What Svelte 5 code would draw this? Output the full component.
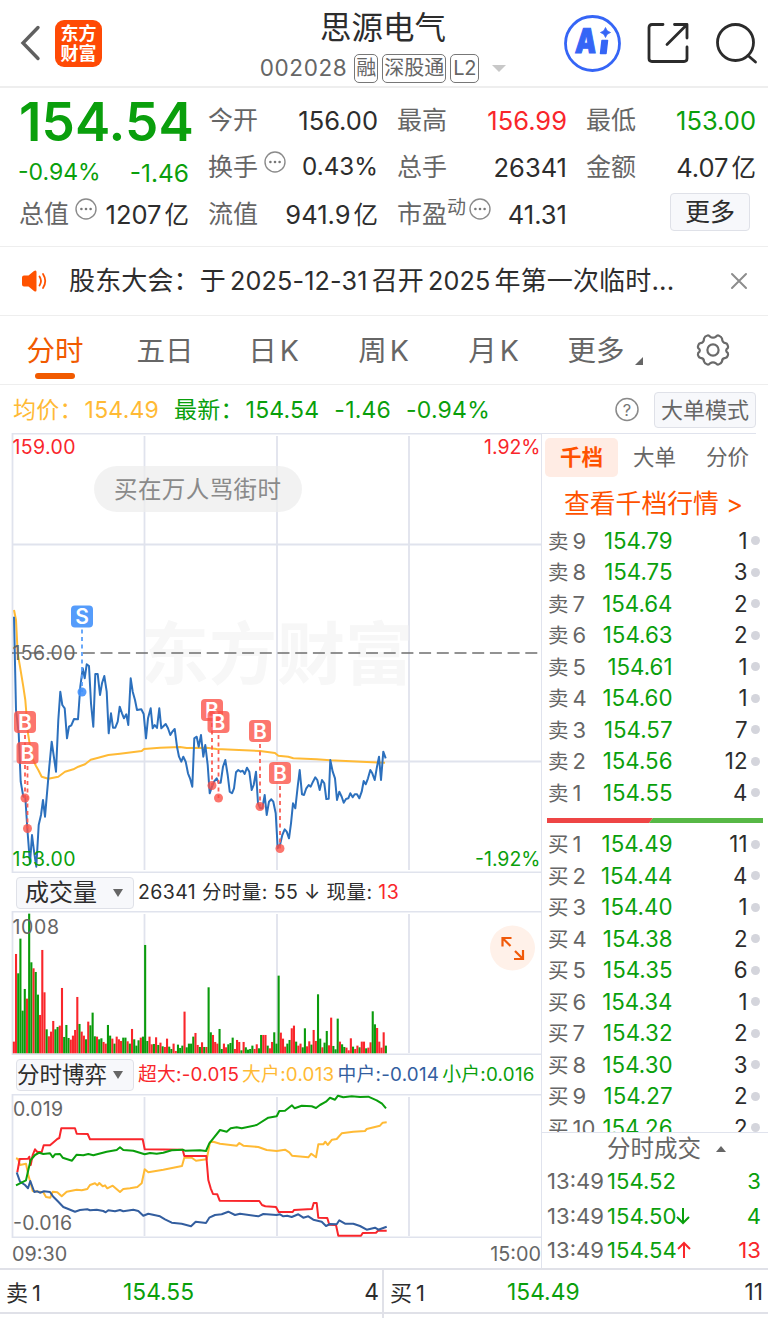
<script lang="ts">
  type Side = "卖" | "买";
  type Level = { side: Side; level: number; price: string; qty: number };

  const tabs = ["分时", "五日", "日K", "周K", "月K", "更多"];
  let activeTab = $state("分时");
  let noticeOpen = $state(true);

  const asks: Level[] = [
    ["154.79", 1], ["154.75", 3], ["154.64", 2], ["154.63", 2], ["154.61", 1],
    ["154.60", 1], ["154.57", 7], ["154.56", 12], ["154.55", 4],
  ].map(([price, qty], i) => ({ side: "卖", level: 9 - i, price, qty }) as Level);

  const bids: Level[] = [
    ["154.49", 11], ["154.44", 4], ["154.40", 1], ["154.38", 2], ["154.35", 6],
    ["154.34", 1], ["154.32", 2], ["154.30", 3], ["154.27", 2], ["154.26", 2],
  ].map(([price, qty], i) => ({ side: "买", level: i + 1, price, qty }) as Level);

  const trades = [
    { time: "13:49", price: "154.52", dir: "", qty: 3 },
    { time: "13:49", price: "154.50", dir: "down", qty: 4 },
    { time: "13:49", price: "154.54", dir: "up", qty: 13 },
  ];

  // samples are stored in thirds of a pixel, relative to the chart's top edge
  function line(raw: string, top = 0) {
    return raw
      .trim()
      .split(/\s+/)
      .map((p) => {
        const [x, y] = p.split(",").map(Number);
        return `${(x / 3).toFixed(1)},${(top + y / 3).toFixed(1)}`;
      })
      .join(" ");
  }

  const price = line(`42,50 48,330 56,400 62,545 70,590 76,590 82,685 90,790 96,705 103,760 109,800 116,675 123,645
    129,600 135,650 148,500 155,425 168,515 175,360 181,275 187,315 194,325 201,415 207,380 214,376 222,357 234,358
    241,260 248,205 254,235 260,193 267,198 273,310 280,380 286,222 293,222 300,285 306,250 313,228 320,275 326,400
    333,340 339,383 346,383 353,365 359,320 366,340 372,355 379,343 385,375 392,235 398,275 405,300 411,330 424,328
    431,342 438,415 444,355 452,325 458,385 464,375 471,384 478,325 484,385 497,372 504,385 511,405 517,395 524,387
    531,440 537,470 544,485 550,470 557,485 564,520 570,535 577,560 583,415 590,410 596,440 603,405 610,470 616,435
    623,495 629,580 636,560 642,545 650,535 656,548 662,548 669,500 676,480 683,525 689,575 696,580 702,565 708,517
    715,510 722,515 728,512 734,522 741,503 748,515 755,570 761,555 768,515 774,610 781,625 787,625 794,585 800,645
    807,605 814,598 820,605 827,640 833,745 840,735 847,705 854,688 860,695 867,715 873,670 879,610 886,625 893,560
    899,510 906,583 912,585 919,565 926,555 932,560 939,545 946,532 952,540 959,570 966,540 973,550 979,597 986,596
    991,480 998,515 1005,535 1011,600 1018,575 1025,590 1031,608 1038,597 1045,595 1051,580 1058,592 1064,583
    1071,583 1078,595 1085,575 1091,543 1097,553 1104,535 1111,510 1117,520 1124,540 1131,500 1137,470 1143,540
    1150,455 1157,475`, 167);

  const average = line(`42,30 48,60 53,160 60,200 70,260 76,300 84,400 95,470 108,498 115,510 125,530 145,536 175,530
    195,515 220,508 235,500 255,493 272,479 295,473 325,465 360,461 425,453 432,447 480,443 540,441 560,444 620,443
    650,447 700,449 780,453 825,459 835,467 865,470 880,475 950,478 990,481 1100,486 1155,488`, 167);

  const marks = [
    { t: "S", x: 82, y: 183.5, to: 259 },
    { t: "B", x: 25, y: 289, to: 365 },
    { t: "B", x: 27.5, y: 320, to: 395.5 },
    { t: "B", x: 212, y: 277, to: 352.5 },
    { t: "B", x: 218.5, y: 289, to: 365 },
    { t: "B", x: 260, y: 298, to: 373.5 },
    { t: "B", x: 280, y: 340, to: 415.5 },
  ];

  // one bar a minute: r = rising, g = falling
  const volume = `r35 r298 g240 g344 g128 g193 r164 g419 g273 r255 g244 g176 r115 r310 r183 g72 r51 r65 r97 g72
    g79 r83 r196 g49 g85 g46 r41 r53 r70 r169 g88 r65 r53 g42 r95 g84 g122 g51 r50 g42
    g45 r34 r29 g85 g53 r44 g29 r50 r42 r37 g47 g47 r36 g29 r73 g42 g23 g39 r47 g50
    g325 g37 r50 r27 g28 r48 g25 r32 g21 r19 r44 g20 g13 r29 r7 g26 g16 g23 r125 g18
    g29 g29 g50 r61 r25 g19 r33 g19 r19 g198 g63 r55 r34 r29 g73 g13 r29 r18 g27 g31
    g47 r13 r40 r34 g9 r34 g18 g11 g13 g23 r13 r27 g15 g55 r55 r55 g23 r15 r34 g63 g29
    g233 r62 r44 r20 g29 g40 r75 r83 g35 r23 r29 g18 g75 r21 r36 g26 r70 r37 g177 g44 r18 g32 g67 r24 r107
    g22 g12 g104 r35 g27 g19 r17 r9 r45 g20 r13 r23 g18 r35 r35 g15 r17 r33 g126 g87 r76 r35 r17 r63 g23`
    .split(/\s+/)
    .map((s, i) => ({ up: s[0] === "r", h: +s.slice(1) / 3, x: (39 + 6.565 * i) / 3 }));

  const flows = [
    { cls: "yellow", pts: line(`48,310 54,312 60,330 78,326 85,360 92,385 98,408 130,412 138,426 151,428 158,410 172,412
      185,424 200,410 230,404 245,406 262,402 270,390 285,385 292,391 298,384 308,394 315,391 322,400 338,392 360,411 370,402
      390,400 412,396 425,385 434,343 445,352 490,344 546,333 553,308 575,308 588,317 620,313 630,262 640,260 660,266
      710,272 718,264 730,272 775,276 800,285 830,288 855,284 868,292 876,302 925,307 934,296 948,307 955,268 970,268
      976,260 983,270 996,254 1010,252 1025,235 1060,230 1095,228 1100,222 1140,212 1148,203 1160,202`, -39) },
    { cls: "red", pts: line(`52,352 59,312 84,311 88,305 92,330 98,300 105,283 112,291 125,291 131,271 150,271 158,264
      165,258 172,252 178,249 184,220 225,220 230,236 263,237 270,253 428,253 434,283 548,284 553,303 619,303 625,375
      632,400 639,417 652,418 659,437 778,438 786,450 796,454 828,456 836,471 878,471 882,465 936,462 941,444 950,444
      955,488 982,489 988,509 1008,510 1015,542 1083,542 1088,534 1128,533 1134,527 1160,527`, -39) },
    { cls: "navy", pts: line(`50,352 60,380 75,390 84,400 91,378 103,411 112,409 120,413 132,409 150,411 160,425 175,440
      190,456 205,462 225,470 240,465 262,463 270,466 290,464 310,468 317,472 325,466 345,469 360,465 370,469 400,464
      415,468 430,482 445,476 480,484 495,493 515,503 545,506 573,514 587,500 618,504 628,488 645,480 665,478 685,470
      705,480 720,476 775,484 790,477 830,480 840,478 850,484 862,482 875,486 895,478 910,488 925,484 940,494 965,500
      978,513 990,507 1010,508 1018,496 1035,506 1060,506 1080,513 1100,524 1125,518 1135,524 1160,515`, -39) },
    { cls: "green", pts: line(`48,391 60,385 78,376 85,345 92,315 105,300 118,293 130,297 150,295 158,307 165,298 180,297
      188,308 216,317 230,299 250,301 265,297 280,301 320,290 350,285 360,277 370,285 400,287 434,298 450,294 470,296
      490,293 515,286 548,284 555,287 600,286 618,288 628,265 640,250 660,225 680,230 692,220 710,217 725,220 770,210
      805,188 830,184 838,168 855,167 876,151 884,160 905,152 935,154 948,159 960,150 978,140 990,128 1005,134 1014,122
      1030,127 1055,124 1080,126 1105,125 1130,136 1146,146 1158,160`, -39) },
  ];
</script>

{#snippet dots()}
  <svg class="dots" width="22" height="22" viewBox="0 0 22 22">
    <circle cx="11" cy="11" r="10" fill="none" stroke="#8b8b8b" stroke-width="1.4" />
    <circle cx="6.4" cy="11" r="1.3" fill="#777" />
    <circle cx="11" cy="11" r="1.3" fill="#777" />
    <circle cx="15.6" cy="11" r="1.3" fill="#777" />
  </svg>
{/snippet}

{#snippet bookRow(row: Level)}
  <div class="book-row">
    <span class="label">{row.side}<i>{row.level}</i></span>
    <span class="book-price">{row.price}</span>
    <span class="qty">{row.qty}</span>
    <span class="dot"></span>
  </div>
{/snippet}

<div class="screen">
  <header>
    <div class="head-left">
      <svg width="22" height="36" viewBox="0 0 22 36">
        <path d="M19 2.5 L4 18 L19 33.5" fill="none" stroke="#606060" stroke-width="3.4" stroke-linecap="round" />
      </svg>
      <div class="logo"><span>东方</span><span>财富</span></div>
    </div>
    <div class="head-mid">
      <h1>思源电气</h1>
      <div class="code">
        <span class="num">002028</span>
        <span class="tag">融</span>
        <span class="tag">深股通</span>
        <span class="tag latin">L2</span>
        <span class="caret"></span>
      </div>
    </div>
    <div class="head-right">
      <svg width="58" height="58" viewBox="0 0 58 58">
        <circle cx="28.5" cy="29.5" r="27" fill="#fff" stroke="#3565f6" stroke-width="2.8" />
        <text x="12.5" y="39.5" font-size="34" font-weight="900" fill="#3565f6" stroke="#3565f6" stroke-width="1.2" textLength="21" lengthAdjust="spacingAndGlyphs" transform="skewX(-4) translate(1 0)">A</text>
        <path d="M38 26.5 H43.5 L42 39.5 H36.5 Z" fill="#3565f6" stroke="#3565f6" stroke-width="1.5" stroke-linejoin="round" />
        <path d="M41.5 13.500 Q42.500 17.500 46.500 18.500 Q42.500 19.500 41.500 23.500 Q40.500 19.500 36.500 18.500 Q40.500 17.500 41.500 13.500Z" fill="#3565f6" stroke="#3565f6" stroke-width="0.8" />
      </svg>
      <svg class="share" width="44" height="44" viewBox="0 0 44 44" fill="none" stroke="#2b2b2b" stroke-width="2.8" stroke-linecap="round" stroke-linejoin="round">
        <path d="M17 3.500 H6 Q3 3.500 3 6.500 V37.500 Q3 40.500 6 40.500 H38 Q41 40.500 41 37.500 V26" />
        <path d="M28.500 3.500 H41 V17 M41 3.500 L21 23.500" />
      </svg>
      <svg width="44" height="44" viewBox="0 0 44 44" fill="none" stroke="#2b2b2b" stroke-width="2.8" stroke-linecap="round">
        <circle cx="20.500" cy="21.500" r="18" />
        <path d="M33 34.500 L40.500 41" />
      </svg>
    </div>
  </header>

  <section class="quote">
    <div class="cell big green">154.54</div>
    <div class="cell"><span>今开</span><b>156.00</b></div>
    <div class="cell"><span>最高</span><b class="red">156.99</b></div>
    <div class="cell"><span>最低</span><b class="green">153.00</b></div>

    <div class="cell change green"><b class="pct">-0.94%</b><b>-1.46</b></div>
    <div class="cell"><span>换手{@render dots()}</span><b class="pct">0.43%</b></div>
    <div class="cell"><span>总手</span><b>26341</b></div>
    <div class="cell"><span>金额</span><b>4.07<em>亿</em></b></div>

    <div class="cell"><span>总值{@render dots()}</span><b>1207<em>亿</em></b></div>
    <div class="cell"><span>流值</span><b>941.9<em>亿</em></b></div>
    <div class="cell"><span>市盈<sup>动</sup>{@render dots()}</span><b>41.31</b></div>
    <div class="cell end"><button class="more">更多</button></div>
  </section>

  {#if noticeOpen}
    <section class="notice">
      <svg width="28" height="24" viewBox="0 0 28 24">
        <path d="M3 6.500 H7.500 L13 2 Q15.500 0.500 15.500 3 V21 Q15.500 23.500 13 22 L7.500 17.500 H3 Q1 17.500 1 15.500 V8.500 Q1 6.500 3 6.500Z" fill="#ff5200" />
        <path d="M18.500 7.500 Q21.500 12 18.500 16.500 M22 5 Q26.500 12 22 19" fill="none" stroke="#ff5200" stroke-width="1.8" stroke-linecap="round" />
      </svg>
      <p>股东大会：于<i>2025-12-31</i>召开<i>2025</i>年第一次临时...</p>
      <button class="close" aria-label="关闭" onclick={() => (noticeOpen = false)}>
        <svg width="18" height="18" viewBox="0 0 18 18"><path d="M2 2 L16 16 M16 2 L2 16" stroke="#8d8d8d" stroke-width="2" stroke-linecap="round" /></svg>
      </button>
    </section>
  {/if}

  <nav>
    {#each tabs as tab}
      <button class="tab" class:active={tab === activeTab} class:kline={tab.endsWith("K")} onclick={() => (activeTab = tab)}>
        {tab}{#if tab === "更多"}<span class="corner"></span>{/if}
      </button>
    {/each}
    <svg class="gear" width="34" height="34" viewBox="0 0 34 34" fill="none" stroke="#6a6a6a" stroke-width="2.2" stroke-linejoin="round">
      <path d="M11.500 2.500 Q13 2.200 14 3.600 Q17 5.800 20 3.600 Q21 2.200 22.500 2.500 Q25.500 3.800 26 5.500 Q26.300 9.800 29.500 10.200 Q31 10.500 31.600 12 Q32.500 14 31.800 15 Q28.500 17.500 31.800 20 Q32.500 22 31.600 23 Q31 24.500 29.500 24.800 Q26 25 26 28.500 Q25 31 22.500 31.500 Q21 31.800 20 30.400 Q17 28.200 14 30.400 Q13 31.800 11.500 31.500 Q8.500 30.500 8 28.500 Q8 25 4.500 24.800 Q3 24.500 2.400 23 Q1.500 22 2.200 20 Q5.500 17.500 2.200 15 Q1.500 14 2.400 12 Q3 10.500 4.500 10.200 Q8 9.800 8 5.500 Q8.800 3 11.500 2.500Z" />
      <circle cx="17" cy="17" r="5.600" />
    </svg>
  </nav>

  <div class="summary">
    <span class="yellow">均价：<i>154.49</i></span>
    <span class="green">最新：<i>154.54</i></span>
    <span class="green">-1.46</span>
    <span class="green">-0.94%</span>
    <svg class="help" width="26" height="26" viewBox="0 0 26 26">
      <circle cx="13" cy="12.500" r="11" fill="none" stroke="#8a8a8a" stroke-width="1.5" />
      <text x="13" y="18.500" text-anchor="middle" font-size="16.5" fill="#777">?</text>
    </svg>
    <button class="mode">大单模式</button>
  </div>

  <main>
    <div class="charts">
      <svg width="541" height="440" viewBox="0 0 541 440">
        <g class="grid">
          <path d="M12.5 440 V0.5 H541" />
          <path d="M144.5 3 V437 M277 3 V437 M409 3 V437 M12 111.5 H541 M12 328.5 H541" />
          <path d="M12 439.5 H541" />
        </g>
        <text class="watermark" x="141" y="246" textLength="272" lengthAdjust="spacingAndGlyphs">东方财富</text>
        <path d="M12 220 H541" stroke="#6f6f6f" stroke-width="1.5" stroke-dasharray="12 5.7" />
        <polyline points={average} class="curve" stroke="#ffba35" />
        <polyline points={price} class="curve" stroke="#2c70bd" />
        {#each marks as m}
          <g class={m.t === "S" ? "mark sell" : "mark"}>
            <path d="M{m.x} {m.y + 13} V{m.to}" class="stem" />
            <circle cx={m.x} cy={m.to} r="4.5" />
            <rect x={m.x - 11} y={m.y - 11} width="22" height="22" rx="4" />
            <text x={m.x} y={m.y + 7.5}>{m.t}</text>
          </g>
        {/each}
        <text class="axis up" x="12.500" y="20.500" textLength="63">159.00</text>
        <text class="axis up" x="484" y="20.500" textLength="56.500">1.92%</text>
        <text class="axis" x="12.500" y="227" textLength="63">156.00</text>
        <text class="axis down" x="12.500" y="432.500" textLength="63">153.00</text>
        <text class="axis down" x="475" y="432.500" textLength="65.500">-1.92%</text>
        <rect x="94" y="33" width="208" height="46" rx="23" fill="#ededed" opacity="0.75" />
        <text x="114" y="65" font-size="23.5" fill="#8a8a8a" textLength="167">买在万人骂街时</text>
      </svg>

      <div class="bar">
        <button class="select">成交量<span></span></button>
        <p class="total">26341 分时量: 55 ↓ 现量: <span class="red">13</span></p>
      </div>

      <svg width="541" height="144" viewBox="0 0 541 144">
        <g class="grid">
          <path d="M12.5 144 V0.5 H541" />
          <path d="M144.5 3 V142 M277 3 V142 M409 3 V142" />
          <path d="M12 143.5 H541" />
        </g>
        {#each volume as v}
          <rect x={v.x - 0.2} y={142.3 - v.h} width="2.1" height={v.h} fill={v.up ? "#f9262b" : "#0a9b0c"} />
        {/each}
        <text class="axis" x="12.500" y="22.500" textLength="46.500">1008</text>
        <circle cx="512.500" cy="37" r="22.500" fill="#fff1e9" />
        <path d="M502.500 35.500 V27 H511.500 M502.500 27 L510.500 35 M523 39 V48 H514 M523 48 L515 40" fill="none" stroke="#f05a0a" stroke-width="2.2" />
      </svg>

      <div class="bar tall">
        <button class="select tight">分时博弈<span></span></button>
        <p class="flow">
          <span class="red">超大:-0.015</span><span class="yellow">大户:0.013</span><span class="navy">中户:-0.014</span><span class="green">小户:0.016</span>
        </p>
      </div>

      <svg width="541" height="144" viewBox="0 0 541 144">
        <g class="grid">
          <path d="M12.5 144 V0.5 H541" />
          <path d="M144.5 3 V142 M277 3 V142 M409 3 V142" />
          <path d="M12 143.5 H541" />
        </g>
        <text class="axis" x="13" y="21.500" textLength="50">0.019</text>
        <text class="axis" x="13" y="136" textLength="59">-0.016</text>
        {#each flows as f}
          <polyline points={f.pts} class="curve {f.cls}" stroke="currentColor" />
        {/each}
      </svg>

      <div class="times"><span>09:30</span><span>15:00</span></div>
    </div>

    <aside>
      <div class="side-tabs">
        <button class="on">千档</button>
        <button>大单</button>
        <button>分价</button>
      </div>
      <div class="link">查看千档行情 &gt;</div>
      <div class="book">
        {#each asks as row}{@render bookRow(row)}{/each}
        <svg class="ratio" width="216" height="5" viewBox="0 0 216 5">
          <path d="M0 0 H106 L102 5 H0Z" fill="#ee4545" />
          <path d="M106 0 H216 V5 H102Z" fill="#57b846" />
        </svg>
        {#each bids as row}{@render bookRow(row)}{/each}
      </div>
      <div class="deals">
        <div class="deals-head">分时成交<span></span></div>
        {#each trades as t}
          <div class="deal">
            <span class="time">{t.time}</span>
            <span class="green">{t.price}</span>
            {#if t.dir}
              <svg class={t.dir === "up" ? "red" : "green"} width="14" height="18" viewBox="0 0 14 18" fill="none" stroke="currentColor" stroke-width="2">
                <path d={t.dir === "up" ? "M7 17 V2 M1 8 L7 2 L13 8" : "M7 1 V16 M1 10 L7 16 L13 10"} />
              </svg>
            {/if}
            <span class="deal-qty {t.dir === 'up' ? 'red' : 'green'}">{t.qty}</span>
          </div>
        {/each}
      </div>
    </aside>
  </main>

  <footer>
    <div><span>卖<i>1</i></span><span class="green">154.55</span><span>4</span></div>
    <div><span>买<i>1</i></span><span class="green">154.49</span><span>11</span></div>
  </footer>
</div>

<style>
  :global(body) {
    background: #fff;
  }

  .screen {
    width: 768px;
    height: 1318px;
    overflow: hidden;
    background: #fff;
    color: #2d2d2d;
    font-family: Inter, "Noto Sans CJK SC", sans-serif;
    font-size: 24px;
    line-height: 1;
  }

  .screen * {
    box-sizing: border-box;
  }

  button {
    font: inherit;
    color: inherit;
    background: none;
    border: 0;
    padding: 0;
    white-space: nowrap;
  }

  p,
  h1 {
    margin: 0;
    font-weight: 400;
    white-space: nowrap;
  }

  i,
  em,
  b {
    font-style: normal;
    font-weight: 400;
  }

  svg {
    display: block;
    flex-shrink: 0;
  }

  .red {
    color: #f9262b;
  }

  .green {
    color: #0a9f0c;
  }

  .yellow {
    color: #ffba35;
  }

  .navy {
    color: #335e9f;
  }

  header {
    display: grid;
    grid-template-columns: 255px 256px 257px;
    height: 88px;
    border-bottom: 2px solid #eee;
  }

  .head-left {
    display: flex;
    align-items: center;
    gap: 14px;
    padding-left: 19px;
  }

  .logo {
    display: flex;
    flex-direction: column;
    justify-content: center;
    align-items: center;
    gap: 1px;
    width: 47px;
    height: 47px;
    border-radius: 9px;
    background: #ff4a05;
    color: #fff;
    font-size: 18px;
    font-weight: 700;
    line-height: 19px;
  }

  .head-mid {
    display: flex;
    flex-direction: column;
    align-items: center;
  }

  h1 {
    margin-top: 7px;
    font-size: 31.5px;
    line-height: 42px;
  }

  .code {
    display: flex;
    align-items: center;
    gap: 4px;
    margin-top: 5px;
    color: #666;
    font-size: 22.5px;
  }

  .code .num {
    margin-right: 3px;
    letter-spacing: 0.6px;
  }

  .tag {
    height: 29px;
    padding: 0 1px;
    border: 1.5px solid #777;
    border-radius: 5px;
    font-size: 20px;
    line-height: 27px;
  }

  .tag.latin {
    padding: 0 2px;
    letter-spacing: -0.3px;
  }

  .caret {
    margin-left: 9px;
    border: 7px solid transparent;
    border-top-color: #c8c8c8;
    border-bottom: 0;
  }

  .head-right {
    display: flex;
    align-items: center;
    padding-left: 53px;
  }

  .head-right .share {
    margin: 0 25px 0 24px;
  }

  .quote {
    display: grid;
    grid-template-columns: repeat(4, 169px);
    grid-auto-rows: 47px;
    column-gap: 20px;
    height: 159px;
    padding: 9px 0 0 19px;
    border-bottom: 1.5px solid #eee;
  }

  .cell {
    display: flex;
    align-items: center;
    justify-content: space-between;
    white-space: nowrap;
  }

  .cell span {
    display: flex;
    align-items: center;
    color: #666;
    font-size: 25px;
  }

  .cell b {
    margin-right: -1px;
    font-size: 25.5px;
  }

  .cell b.pct {
    font-size: 24.2px;
  }

  .cell em {
    margin-left: 3px;
    font-size: 24.5px;
  }

  .cell.big {
    font-size: 53px;
    font-weight: 600;
    padding-top: 4px;
    letter-spacing: 0.1px;
  }

  .cell.change {
    padding-top: 12px;
  }

  .cell.change b {
    font-size: 24.5px;
  }

  .cell.change b.pct {
    margin: -2px 0 0 -1px;
    font-size: 23px;
  }

  .dots {
    margin: -12px 0 0 6px;
  }

  sup {
    margin-top: -14px;
    font-size: 19px;
    line-height: 1;
  }

  sup + :global(.dots) {
    margin-left: 3px;
  }

  .cell.end {
    justify-content: flex-end;
    padding-right: 5px;
  }

  .more {
    width: 80px;
    height: 38px;
    margin-top: -5px;
    border: 1.5px solid #dfe1e8;
    border-radius: 4px;
    background: #f7f8fb;
    font-size: 25px;
  }

  .notice {
    display: flex;
    align-items: center;
    height: 69px;
    padding: 0 20px 0 21px;
    border-bottom: 1.5px solid #eee;
  }

  .notice p {
    flex: 1;
    margin-left: 20px;
    font-size: 26px;
    letter-spacing: 0.15px;
  }

  .notice i {
    margin: 0 4px;
    font-size: 25.2px;
  }

  nav {
    display: flex;
    align-items: center;
    height: 69px;
    border-bottom: 1.5px solid #eee;
  }

  .tab {
    position: relative;
    width: 110px;
    height: 66px;
    padding-top: 2px;
    color: #666;
    font-size: 28.5px;
  }

  .tab.kline {
    letter-spacing: 3px;
  }

  .tab.active {
    color: #f15a00;
  }

  .tab.active::after {
    content: "";
    position: absolute;
    left: 35px;
    bottom: 4px;
    width: 40px;
    height: 6px;
    border-radius: 3px;
    background: #f15a00;
  }

  .corner {
    display: inline-block;
    margin: 0 0 -4px 10px;
    border-left: 8px solid transparent;
    border-bottom: 8px solid #666;
  }

  .gear {
    margin-left: 36px;
  }

  .summary {
    display: flex;
    align-items: center;
    gap: 15px;
    height: 48px;
    padding: 2px 12px 0 13px;
    font-size: 23px;
    letter-spacing: 0.2px;
    white-space: nowrap;
  }

  .summary i {
    margin-left: 2px;
  }

  .help {
    margin-left: auto;
    margin-right: -1px;
    letter-spacing: 0;
  }

  .mode {
    width: 102px;
    height: 36px;
    border: 1.5px solid #dfe1e8;
    border-radius: 4px;
    background: #f7f8fb;
    color: #666;
    font-size: 22px;
    letter-spacing: 0;
  }

  main {
    display: grid;
    grid-template-columns: 541px 1fr;
    height: 835px;
  }

  .grid path {
    fill: none;
    stroke: #e0e3ed;
    stroke-width: 1.8;
  }

  .curve {
    fill: none;
    stroke-width: 2;
    stroke-linejoin: round;
  }

  .watermark {
    fill: #f7f7f7;
    font-size: 68px;
    font-weight: 700;
  }

  .axis {
    fill: #666;
    font-size: 19.5px;
  }

  .axis.up {
    fill: #f9262b;
  }

  .axis.down {
    fill: #0a9f0c;
  }

  .mark {
    fill: #fb4f45;
    fill-opacity: 0.78;
    stroke: none;
  }

  .mark .stem {
    stroke: #fb5f55;
    stroke-width: 1.8;
    stroke-dasharray: 4 3.5;
  }

  .mark.sell {
    fill: #4391fb;
    fill-opacity: 0.9;
  }

  .mark.sell .stem {
    stroke: #5a9ff9;
  }

  .mark text {
    fill: #fff;
    fill-opacity: 1;
    font-size: 21px;
    font-weight: 600;
    text-anchor: middle;
  }

  .bar {
    display: flex;
    align-items: center;
    height: 38px;
    padding: 1px 0 0 16px;
  }

  .bar.tall {
    height: 39px;
  }

  .select {
    display: flex;
    align-items: center;
    justify-content: space-between;
    width: 118px;
    height: 32px;
    padding: 0 10px 0 8px;
    border: 1.5px solid #dfe1e8;
    border-radius: 4px;
    background: #f7f8fb;
    font-size: 24px;
  }

  .select.tight {
    padding-left: 0;
    font-size: 22.5px;
  }

  .select span {
    border: 5px solid transparent;
    border-top: 8px solid #666;
    border-bottom: 0;
  }

  .bar p {
    margin-left: 4px;
    font-size: 19.5px;
  }

  .bar p.total {
    letter-spacing: 0.4px;
  }

  .bar p.flow {
    display: flex;
    gap: 3px;
    font-size: 18.8px;
    letter-spacing: 0.25px;
  }

  .times {
    display: flex;
    justify-content: space-between;
    padding: 7px 0 0 12px;
    color: #666;
    font-size: 19.8px;
  }

  aside {
    display: flex;
    flex-direction: column;
    min-width: 0;
    border-left: 1.5px solid #e0e3ed;
  }

  .side-tabs {
    display: flex;
    height: 49px;
    margin-right: 12px;
    padding: 4px 0 0 3px;
    border-top: 1.5px solid #e0e3ed;
  }

  .side-tabs button {
    flex: 0 0 73px;
    height: 39px;
    border-radius: 5px;
    color: #666;
    font-size: 21.5px;
  }

  .side-tabs .on {
    background: #ffece4;
    color: #ff5200;
    font-weight: 700;
  }

  .link {
    height: 43px;
    padding-left: 22px;
    color: #ff5200;
    font-size: 25.8px;
    line-height: 43px;
    white-space: nowrap;
  }

  .book {
    height: 607px;
    overflow: hidden;
  }

  .book-row {
    display: grid;
    grid-template-columns: 50px 74.5px 75px 12px;
    align-items: center;
    height: 31.5px;
    padding-left: 6px;
    font-size: 22.3px;
  }

  .label {
    color: #666;
    font-size: 20.5px;
    white-space: nowrap;
  }

  .label i {
    margin-left: 4px;
    font-size: 22px;
  }

  .book-price {
    color: #0a9f0c;
    text-align: right;
  }

  .qty {
    text-align: right;
  }

  .dot {
    width: 9px;
    height: 9px;
    margin-left: 3.5px;
    border-radius: 50%;
    background: #d4d5dc;
  }

  .ratio {
    margin: 9px 0 6px 5px;
  }

  .deals {
    flex: 1;
    border-top: 1.5px solid #e0e3ed;
  }

  .deals-head {
    display: flex;
    align-items: center;
    height: 31px;
    padding-left: 65px;
    color: #666;
    font-size: 23.5px;
  }

  .deals-head span {
    margin-left: 15px;
    border: 5px solid transparent;
    border-bottom: 6px solid #666;
    border-top: 0;
  }

  .deal {
    display: flex;
    align-items: center;
    height: 34.5px;
    padding: 0 7px 0 5px;
    font-size: 22.1px;
  }

  .deal .time {
    width: 60px;
    color: #666;
  }

  .deal-qty {
    margin-left: auto;
  }

  footer {
    display: grid;
    grid-template-columns: 384px 384px;
    height: 50px;
    border-top: 2px solid #e0e1e8;
  }

  /* the divider runs on under the row */
  footer::after {
    content: "";
    height: 5px;
    border-right: 2px solid #e0e1e8;
  }

  footer div {
    display: grid;
    grid-template-columns: 117px 1fr auto;
    align-items: center;
    height: 44px;
    padding: 3px 5px 0 6px;
    border-bottom: 2px solid #e0e1e8;
    font-size: 22.8px;
  }

  footer div:first-child {
    border-right: 2px solid #e0e1e8;
    padding-right: 3px;
  }

  footer div span:first-child {
    font-size: 22px;
  }

  footer i {
    margin-left: 4px;
  }
</style>
